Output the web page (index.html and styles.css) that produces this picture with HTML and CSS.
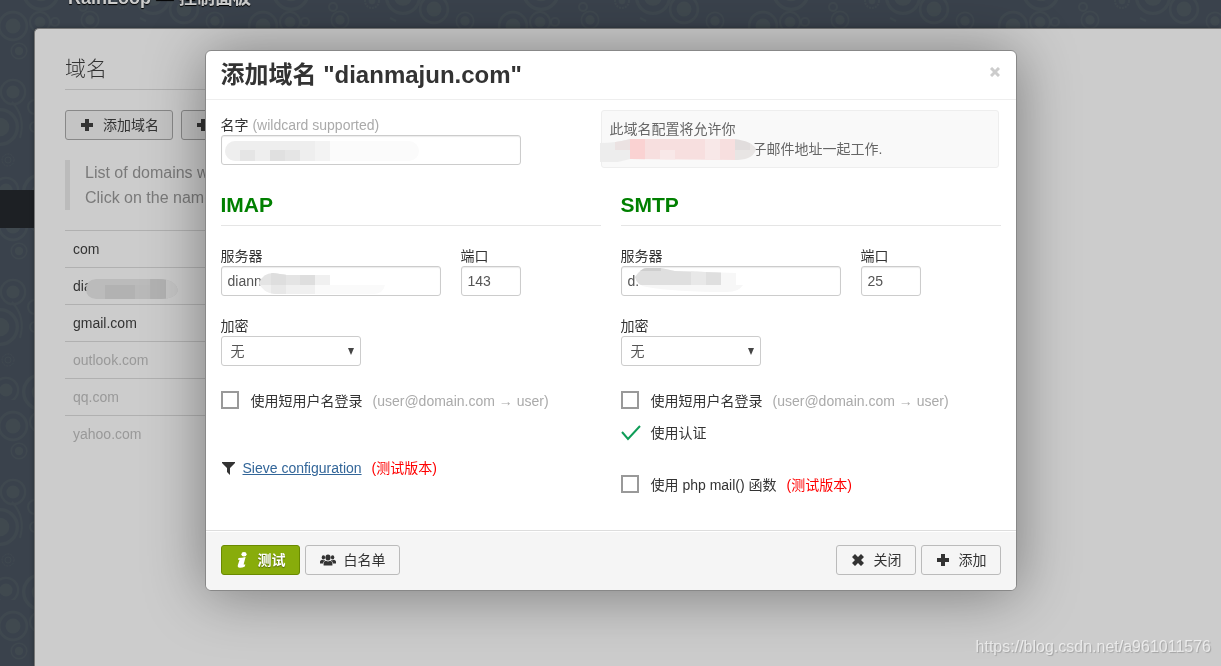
FILE: index.html
```html
<!DOCTYPE html>
<html lang="zh-CN">
<head>
<meta charset="utf-8">
<title>RainLoop — 控制面板</title>
<link rel="stylesheet" href="styles.css">
</head>
<body>
<svg class="sprites" width="0" height="0" aria-hidden="true">
  <symbol id="plus" viewBox="0 0 12 12"><path d="M4 0h4v4h4v4H8v4H4V8H0V4h4z"/></symbol>
  <symbol id="cross" viewBox="0 0 12 12"><path d="M3 0l3 3 3-3 3 3-3 3 3 3-3 3-3-3-3 3-3-3 3-3-3-3z"/></symbol>
  <symbol id="circles" viewBox="0 0 60 60"><circle cx="30" cy="30" r="26" fill="none" stroke-width="5"/><circle cx="30" cy="30" r="14" stroke="none"/></symbol>
</svg>

<svg class="wallpaper" aria-hidden="true">
  <defs>
    <pattern id="rings" width="250" height="200" patternUnits="userSpaceOnUse">
      <g fill="#40494f" stroke="#3f484f">
        <use href="#circles" x="-3" y="10" width="32" height="32"/>
        <use href="#circles" x="10" y="42" width="18" height="18"/>
        <use href="#circles" x="-1" y="78" width="28" height="28"/>
        <use href="#circles" x="-20" y="107" width="40" height="40"/>
        <path d="M12 102q14 15 8 36" fill="none" stroke-width="2"/>
        <circle cx="8" cy="160" r="6" fill="none" stroke-dasharray="2 1"/><circle cx="8" cy="160" r="3" fill="none"/>
        <use href="#circles" x="-8" y="176" width="28" height="28"/>
        <use href="#circles" x="21" y="172" width="40" height="40"/>
        <use href="#circles" x="21" y="-28" width="40" height="40"/>
        <circle cx="35" cy="107" r="7" fill="none" stroke-width="2"/>
        <circle cx="35" cy="127" r="5" fill="none" stroke-width="2"/>
        <circle cx="40" cy="22" r="10" fill="none" stroke-width="2"/><circle cx="40" cy="22" r="5"/>
        <circle cx="55" cy="22" r="4" fill="none" stroke-width="2"/>
        <use href="#circles" x="80" y="10" width="20" height="20"/>
        <circle cx="83" cy="7" r="4" fill="none" stroke-width="2"/>
        <circle cx="122" cy="1" r="7" fill="none" stroke-width="2" stroke-dasharray="2 1"/><circle cx="122" cy="1" r="3"/>
        <use href="#circles" x="134" y="-22" width="38" height="38"/>
        <path d="M140 18l6 3" fill="none" stroke-width="2"/>
        <use href="#circles" x="168" y="-7" width="32" height="32"/>
        <use href="#circles" x="205" y="11" width="20" height="20"/>
        <use href="#circles" x="247" y="10" width="32" height="32"/>
      </g>
    </pattern>
  </defs>
  <rect width="100%" height="100%" fill="url(#rings)"/>
</svg>

<div class="page">
  <header class="site-head"><span class="site-title">RainLoop — 控制面板</span></header>
  <div class="workspace">
    <nav class="side"><a class="side-item" href="#domains" aria-label="域名"></a></nav>
    <main class="panel">
      <div class="panel-inner">
        <h2 class="panel-title">域名</h2>
        <div class="panel-buttons">
          <button class="btn dim" type="button"><svg class="ico"><use href="#plus"/></svg>添加域名</button>
          <button class="btn dim" type="button"><svg class="ico"><use href="#plus"/></svg>添加别名</button>
        </div>
        <blockquote class="hint">List of domains webmail is allowed to access.<br>Click on the name to configure the domain.</blockquote>
        <table class="domains">
          <tbody>
            <tr><td>com</td></tr>
            <tr><td><span class="masked">dia
              <svg class="mask row-mask" viewBox="0 0 94 22"><defs><clipPath id="c0"><path d="M10 1h62q18 0 20 12-4 9-20 8H10Q0 20 0 11T10 1z"/></clipPath></defs><g clip-path="url(#c0)"><path fill="#bbb" d="M0 0h94v22H0z"/><path fill="#b2b2b2" d="M19 7h30v14H19zM64 0h16v22H64z"/><path fill="#b9b9b9" d="M49 7h15v14H49z"/><path fill="#c6c6c6" d="M80 0h14v22H80z"/></g></svg></span></td></tr>
            <tr><td>gmail.com</td></tr>
            <tr class="off"><td>outlook.com</td></tr>
            <tr class="off"><td>qq.com</td></tr>
            <tr class="off"><td>yahoo.com</td></tr>
          </tbody>
        </table>
      </div>
    </main>
  </div>
</div>

<div class="overlay">
  <form class="modal" role="dialog" aria-labelledby="dlg-title">
    <div class="modal-head">
      <h3 class="modal-title" id="dlg-title">添加域名 "dianmajun.com"</h3>
      <button class="close" type="button" aria-label="关闭"><svg class="close-ico" viewBox="0 0 10 10"><path d="M1 1l8 8M9 1L1 9"/></svg></button>
    </div>

    <div class="modal-body">
      <div class="name-row">
        <div class="field">
          <label for="name">名字 <span class="muted">(wildcard supported)</span></label>
          <div class="masked">
            <input class="text wide" id="name" type="text">
            <svg class="mask name-mask" viewBox="0 0 194 20"><defs><clipPath id="c1"><rect width="194" height="20" rx="10"/></clipPath></defs><g clip-path="url(#c1)"><path fill="#fbfbfb" d="M0 0h194v20H0z"/><path fill="#eee" d="M0 0h90v20H0z"/><path fill="#e5e5e5" d="M15 9h15v11H15zM60 9h15v11H60z"/><path fill="#e0e0e0" d="M45 9h15v11H45z"/><path fill="#f3f3f3" d="M90 0h15v20H90z"/></g></svg>
          </div>
        </div>
        <div class="well">此域名配置将允许你<br><span class="masked redacted"><svg class="mask well-mask" viewBox="0 0 156 24"><defs><clipPath id="c2"><path d="M0 4Q16 4 30 0h104q18 2 22 10-2 10-18 11l-108-1-12 3H0z"/></clipPath></defs><g clip-path="url(#c2)"><path fill="#ededed" d="M0 0h30v24H0z"/><path fill="#ebe2e2" d="M15 0h15v11H15z"/><path fill="#f7dfdf" d="M30 0h105v24H30z"/><path fill="#fad2d2" d="M30 0h15v24H30z"/><path fill="#f8e8e8" d="M60 11h15v13H60zM105 0h15v24h-15z"/><path fill="#e1dddd" d="M135 0h15v11h-15z"/><path fill="#e8e5e4" d="M135 11h21v13h-21zM150 0h6v11h-6z"/></g></svg></span>子邮件地址一起工作.</div>
      </div>

      <div class="columns">
        <fieldset class="col">
          <legend>IMAP</legend>
          <div class="fields">
            <div class="field">
              <label for="imap-host">服务器</label>
              <div class="masked">
                <input class="text host" id="imap-host" type="text" value="diann">
                <svg class="mask imap-mask" viewBox="0 0 126 22"><defs><clipPath id="c3"><path d="M0 10Q4 0 14 0l14 2h98v10q-2 10-14 9H16Q4 20 0 10z"/></clipPath></defs><g clip-path="url(#c3)"><path fill="#fafafa" d="M0 12h126v10H0z"/><path fill="#e4e4e4" d="M0 0h71v12H0z"/><path fill="#dedede" d="M12 0h15v12H12zM41 0h15v12H41z"/><path fill="#f0f0f0" d="M56 0h15v12H56zM0 12h56v10H0z"/><path fill="#e8e8e8" d="M12 12h15v10H12z"/></g></svg>
              </div>
            </div>
            <div class="field">
              <label for="imap-port">端口</label>
              <input class="text port" id="imap-port" type="text" value="143">
            </div>
          </div>
          <div class="field">
            <label for="imap-sec">加密</label>
            <div class="pick"><select id="imap-sec"><option>无</option></select><svg class="arrow" viewBox="0 0 6 7"><path d="M0 0h6L3 7z"/></svg></div>
          </div>
          <label class="check"><span class="box"><input type="checkbox"></span>使用短用户名登录<span class="muted">(user@domain.com → user)</span></label>
          <div class="sieve"><svg class="filter" viewBox="0 0 13 13"><path d="M0 0h13v1L8 6v7l-3-3V6L0 1z"/></svg><a href="#sieve">Sieve configuration</a><span class="beta">(测试版本)</span></div>
        </fieldset>

        <fieldset class="col">
          <legend>SMTP</legend>
          <div class="fields">
            <div class="field">
              <label for="smtp-host">服务器</label>
              <div class="masked">
                <input class="text host" id="smtp-host" type="text" value="d.">
                <svg class="mask smtp-mask" viewBox="0 0 108 24"><defs><clipPath id="c4"><path d="M0 9Q6 0 12 0h14l14 3 61 2v12l7 0q-4 7-16 7-52 0-80-5Q2 18 0 9z"/></clipPath></defs><g clip-path="url(#c4)"><path fill="#f7f7f7" d="M0 0h108v24H0z"/><path fill="#dfdfdf" d="M0 0h86v17H0z"/><path fill="#cfcfcf" d="M0 0h26v3H0z"/><path fill="#e8e8e8" d="M56 3h15v14H56z"/></g></svg>
              </div>
            </div>
            <div class="field">
              <label for="smtp-port">端口</label>
              <input class="text port" id="smtp-port" type="text" value="25">
            </div>
          </div>
          <div class="field">
            <label for="smtp-sec">加密</label>
            <div class="pick"><select id="smtp-sec"><option>无</option></select><svg class="arrow" viewBox="0 0 6 7"><path d="M0 0h6L3 7z"/></svg></div>
          </div>
          <label class="check"><span class="box"><input type="checkbox"></span>使用短用户名登录<span class="muted">(user@domain.com → user)</span></label>
          <label class="check"><span class="box"><input type="checkbox" checked><svg class="tick" viewBox="0 0 20 16"><path d="M1 7l6 7L19 1"/></svg></span>使用认证</label>
          <label class="check spaced"><span class="box"><input type="checkbox"></span>使用 php mail() 函数<span class="beta">(测试版本)</span></label>
        </fieldset>
      </div>
    </div>

    <div class="modal-foot">
      <button class="btn go" type="button"><svg class="ico info" viewBox="0 0 10 16"><ellipse cx="7" cy="2.2" rx="2.6" ry="2.2"/><path d="M1.5 6Q5 6 8.6 5L6.6 12.6h1.8l-.8 2.2Q4.500 16 1.600 15.600.400 15 .800 13.200L2.600 7.800H1z"/></svg>测试</button>
      <button class="btn tight" type="button"><svg class="ico people" viewBox="0 0 16 12"><ellipse cx="8" cy="3.600" rx="2.600" ry="3"/><path d="M3.600 11.400V9.200Q3.800 7.200 6 6.800q2 1.400 4 0 2.200.4 2.400 2.400v2.200z"/><ellipse cx="3.400" cy="3.400" rx="1.700" ry="2.100"/><ellipse cx="12.600" cy="3.400" rx="1.700" ry="2.100"/><path d="M0 9.400V7.600Q.200 6 2 5.700q1.400.8 2.600.2l.5.500Q3.300 7.200 3 9.400zM16 9.400V7.600Q15.800 6 14 5.700q-1.400.8-2.600.2l-.5.500q1.800.8 2.100 3z"/></svg>白名单</button>
      <span class="grow"></span>
      <button class="btn" type="button"><svg class="ico"><use href="#cross"/></svg>关闭</button>
      <button class="btn" type="button"><svg class="ico"><use href="#plus"/></svg>添加</button>
    </div>
  </form>
</div>
<div class="watermark">https://blog.csdn.net/a961011576</div>
</body>
</html>
```
FILE: styles.css
```css
* { box-sizing: border-box; }

body {
  margin: 0;
  background: #3a424c;
  color: #333;
  font: 14px/20px "Liberation Sans", "Noto Sans CJK SC", sans-serif;
  overflow: hidden;
}

button, input, select { font: inherit; color: inherit; }
.sprites { position: absolute; }

.wallpaper {
  position: fixed;
  inset: 0;
  width: 100%;
  height: 100%;
}

.page {
  position: relative;
  display: flex;
  flex-direction: column;
  height: 100vh;
}

.site-head {
  height: 28px;
  padding-left: 68px;
  overflow: hidden;
}

.site-title {
  display: block;
  margin-top: -12px;
  color: #ccc;
  font-size: 18px;
  font-weight: bold;
  line-height: 20px;
  text-shadow: 0 1px 1px #000;
}

.workspace { display: flex; flex: 1; }
.side { width: 34px; padding-top: 162px; }
.side-item { display: block; height: 38px; background: #1d2024; }

.panel {
  flex: 1;
  padding: 30px;
  background: #ccc;
  border: 1px solid #777;
  border-width: 1px 0 0 1px;
  border-radius: 5px 0 0 0;
  box-shadow: 0 0 4px rgba(0, 0, 0, .3);
}

.panel-inner { width: 60%; }

.panel-title {
  margin: 0 0 20px;
  padding-bottom: 10px;
  border-bottom: 1px solid #b0b0b0;
  font-size: 21px;
  font-weight: 300;
  line-height: 20px;
}

.panel-buttons { display: flex; gap: 8px; }

.btn {
  display: flex;
  align-items: center;
  justify-content: center;
  gap: 9px;
  height: 30px;
  padding: 0 13px 0 14px;
  background: #f5f5f5;
  border: 1px solid #bbb;
  border-radius: 3px;
}

.btn.dim { background: #c4c4c4; border-color: #888; }
.btn.tight { gap: 7px; padding: 0 13px; }
.ico { width: 12px; height: 12px; margin: 0 1px; fill: #333; }

.hint {
  margin: 20px 0;
  padding-left: 15px;
  border-left: 5px solid #bbb;
  color: #7a7a7a;
  font-size: 16px;
  line-height: 25px;
}

.domains { width: 100%; border-collapse: collapse; }
.domains td { height: 37px; padding: 0 8px; border-top: 1px solid #b0b0b0; }
.domains .off { color: #999; }

.masked { position: relative; }
.mask { position: absolute; pointer-events: none; }
.row-mask { left: 13px; top: 0; width: 94px; height: 22px; }
.name-mask { left: 4px; top: 6px; width: 194px; height: 20px; }
.imap-mask { left: 38px; top: 7px; width: 126px; height: 22px; }
.smtp-mask { left: 14px; top: 2px; width: 108px; height: 24px; }
.well-mask { left: -10px; top: 0; width: 156px; height: 24px; }
.redacted { display: inline-block; width: 143px; height: 20px; vertical-align: top; }

.overlay {
  position: fixed;
  inset: 0;
  display: flex;
  align-items: flex-start;
  justify-content: center;
  padding-top: 50px;
}

.modal {
  width: 812px;
  max-width: 100%;
  background: #fff;
  border: 1px solid #888;
  border-radius: 6px;
  box-shadow: 0 3px 60px rgba(0, 0, 0, .4);
}

.modal-head {
  display: flex;
  justify-content: space-between;
  padding: 9px 15px;
  border-bottom: 1px solid #eee;
}

.modal-title { margin: 0; font-size: 24px; line-height: 30px; }
.close { align-self: flex-start; display: flex; margin-top: 6px; padding: 1px; background: none; border: 0; }
.close-ico { width: 10px; height: 10px; fill: none; stroke: #ccc; stroke-width: 3; }
.modal-body { padding: 10px 15px 29px; }

.name-row {
  display: grid;
  grid-template-columns: 380px 1fr;
  margin-bottom: 17px;
}

.name-row .field { padding-top: 5px; }
.field > label { display: block; }
.muted { color: #aaa; }

.text {
  display: block;
  height: 30px;
  padding: 4px 6px;
  color: #555;
  background: #fff;
  border: 1px solid #ccc;
  border-radius: 3px;
  box-shadow: inset 0 1px 1px rgba(0, 0, 0, .08);
}

.wide { width: 300px; }
.host { width: 220px; }
.port { width: 60px; }

.well {
  margin-right: 2px;
  padding: 8px;
  height: 58px;
  color: #666;
  background: #f9f9f9;
  border: 1px solid #eee;
  border-radius: 3px;
}

.columns {
  display: grid;
  grid-template-columns: 1fr 1fr;
  gap: 20px;
}

.col { min-width: 0; margin: 0; padding: 0; border: 0; }

.col legend {
  width: 100%;
  margin-bottom: 20px;
  padding: 0;
  border-bottom: 1px solid #e5e5e5;
  color: #008000;
  font-size: 21px;
  font-weight: bold;
  line-height: 40px;
}

.fields { display: flex; gap: 20px; margin-bottom: 20px; }
.pick { position: relative; width: 140px; margin-bottom: 19px; }

.pick select {
  display: block;
  width: 100%;
  height: 30px;
  padding: 0 9px;
  color: #555;
  background: #fff;
  border: 1px solid #ccc;
  border-radius: 3px;
  appearance: none;
}

.arrow {
  position: absolute;
  top: 12px;
  right: 7px;
  width: 6px;
  height: 7px;
  fill: #444;
  pointer-events: none;
}

.check {
  display: flex;
  align-items: center;
  height: 32px;
}

.box { position: relative; width: 30px; height: 20px; }

.box input {
  display: block;
  width: 18px;
  height: 18px;
  margin: 0;
  border: 2px solid #999;
  appearance: none;
}

.box input:checked { border-color: transparent; }

.tick {
  position: absolute;
  left: 0;
  top: 2px;
  width: 20px;
  height: 16px;
  fill: none;
  stroke: #0f9d58;
  stroke-width: 2;
  pointer-events: none;
}

.check .muted, .beta { margin-left: 10px; }
.spaced { margin-top: 20px; }
.beta { color: #f00; }
.sieve { display: flex; align-items: center; padding: 41px 0 0 1px; }
.sieve a { color: #369; }
.filter { width: 13px; height: 13px; margin-right: 8px; fill: #333; }

.modal-foot {
  display: flex;
  gap: 5px;
  padding: 14px 15px 15px;
  background: #f5f5f5;
  border-top: 1px solid #ddd;
  border-radius: 0 0 6px 6px;
  box-shadow: inset 0 1px 0 #fff;
}

.grow { flex: 1; }
.btn.go { padding: 0 13px; color: #fff; background: #88ac0b; border-color: #6a8a00; font-weight: bold; text-shadow: 0 1px 1px rgba(0, 0, 0, .4); }
.info { width: 10px; height: 16px; margin: 0 2px; fill: #fff; }
.people { width: 16px; margin: 0 1px; }

.watermark {
  position: fixed;
  right: 10px;
  bottom: 9px;
  color: rgba(255, 255, 255, .65);
  font-size: 16px;
  text-shadow: 1px 1px 1px rgba(0, 0, 0, .2);
}
```
